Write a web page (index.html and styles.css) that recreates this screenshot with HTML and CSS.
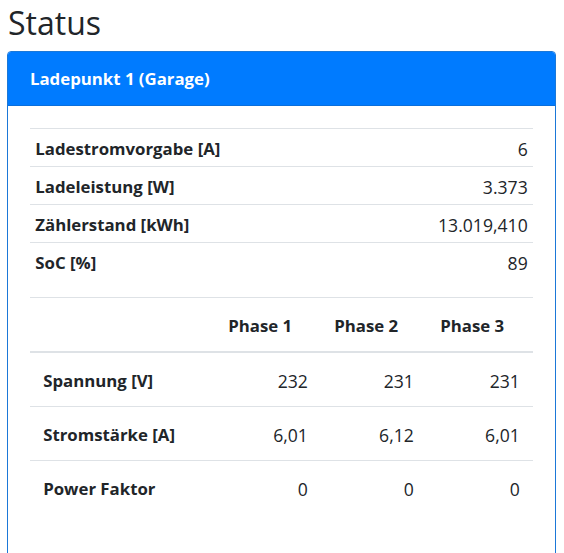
FILE: index.html
```html
<!DOCTYPE html>
<html lang="de">
<head>
  <meta charset="UTF-8" />
  <meta name="viewport" content="width=device-width, initial-scale=1.0"/>
  <title>Status</title>
  <link rel="stylesheet" href="styles.css">
</head>
<body>
  <div class="container">
    <h2>Status</h2>

    <div class="card">
      <div class="card-header">Ladepunkt 1 (Garage)</div>
      <div class="card-body">
        <table class="table table-sm">
          <tbody>
            <tr><th>Ladestromvorgabe [A]</th><td>6</td></tr>
            <tr><th>Ladeleistung [W]</th><td>3.373</td></tr>
            <tr><th>Zählerstand [kWh]</th><td>13.019,410</td></tr>
            <tr><th>SoC [%]</th><td>89</td></tr>
          </tbody>
        </table>

        <table class="table table-phases">
          <thead>
            <tr>
              <th></th>
              <th class="phase">Phase 1</th>
              <th class="phase">Phase 2</th>
              <th class="phase">Phase 3</th>
            </tr>
          </thead>
          <tbody>
            <tr><th>Spannung [V]</th><td>232</td><td>231</td><td>231</td></tr>
            <tr><th>Stromstärke [A]</th><td>6,01</td><td>6,12</td><td>6,01</td></tr>
            <tr><th>Power Faktor</th><td>0</td><td>0</td><td>0</td></tr>
          </tbody>
        </table>
      </div>
    </div>
  </div>
</body>
</html>
```

FILE: styles.css
```css
body {
  font-family: "Open Sans", "Noto Sans", sans-serif;
  font-size: 17.6px;
  line-height: 26.4px;
  color: #212529;
  background: #fff;
  margin: 0;
}
.container {
  padding: 0 8px 0 7px;
}
h2 {
  font-size: 32px;
  font-weight: 400;
  line-height: 42px;
  margin: 2px 0 7px 1px;
}
.card {
  border: 1px solid #1b78d8;
  border-radius: 4px;
}
.card-header {
  background-color: #007bff;
  color: #fff;
  font-weight: bold;
  font-size: 16.8px;
  padding: 14.2px 22px 12.2px;
  border-radius: 3px 3px 0 0;
  border-bottom: 1px solid #0a6fdc;
}
.card-body {
  padding: 22px 22px 28px;
}
.table {
  width: 100%;
  border-collapse: collapse;
  margin-bottom: 17.6px;
}
.table th,
.table td {
  border-top: 1px solid #dee2e6;
  vertical-align: top;
}
.table th {
  text-align: left;
  font-weight: bold;
  font-size: 16.8px;
}
.table td {
  text-align: right;
}
.table-sm th,
.table-sm td {
  padding: 7.3px 5.3px 3.3px;
}
.table-phases th,
.table-phases td {
  padding: 15.2px 13.2px 11.2px;
}
.table-phases thead th {
  padding-top: 14.2px;
  padding-bottom: 12.2px;
  border-bottom: 2px solid #dee2e6;
}
.table-phases .phase {
  width: 79.6px;
}
```
